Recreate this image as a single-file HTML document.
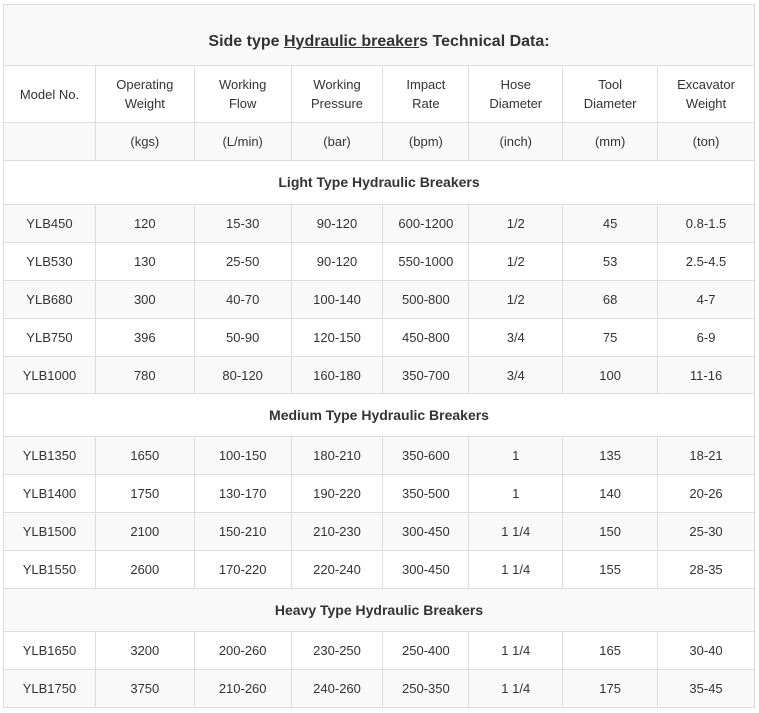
<!DOCTYPE html>
<html><head><meta charset="utf-8"><style>
body{margin:0;background:#fff;font-family:"Liberation Sans",sans-serif;color:#333;}
table{position:absolute;left:3px;top:4px;border-collapse:collapse;width:752px;font-size:13px;}
td{border:1px solid #ddd;text-align:center;padding:0;line-height:19px;}
tr:nth-child(odd) td{background:#f9f9f9;}
.t td{height:61px;font-size:16px;font-weight:bold;padding-top:12px;box-sizing:border-box;}
.sec td{font-weight:bold;font-size:14px;}
</style></head><body>
<table>
<colgroup><col style="width:92px"><col style="width:99px"><col style="width:97px"><col style="width:92px"><col style="width:86px"><col style="width:94px"><col style="width:95px"><col style="width:97px"></colgroup>
<tr class="t"><td colspan="8">Side type <u>Hydraulic breaker</u>s Technical Data:</td></tr>
<tr style="height:57px"><td>Model No.</td><td>Operating<br>Weight</td><td>Working<br>Flow</td><td>Working<br>Pressure</td><td>Impact<br>Rate</td><td>Hose<br>Diameter</td><td>Tool<br>Diameter</td><td>Excavator<br>Weight</td></tr>
<tr style="height:38px"><td></td><td>(kgs)</td><td>(L/min)</td><td>(bar)</td><td>(bpm)</td><td>(inch)</td><td>(mm)</td><td>(ton)</td></tr>
<tr class="sec" style="height:44px"><td colspan="8">Light Type Hydraulic Breakers</td></tr>
<tr style="height:38px"><td>YLB450</td><td>120</td><td>15-30</td><td>90-120</td><td>600-1200</td><td>1/2</td><td>45</td><td>0.8-1.5</td></tr>
<tr style="height:38px"><td>YLB530</td><td>130</td><td>25-50</td><td>90-120</td><td>550-1000</td><td>1/2</td><td>53</td><td>2.5-4.5</td></tr>
<tr style="height:38px"><td>YLB680</td><td>300</td><td>40-70</td><td>100-140</td><td>500-800</td><td>1/2</td><td>68</td><td>4-7</td></tr>
<tr style="height:38px"><td>YLB750</td><td>396</td><td>50-90</td><td>120-150</td><td>450-800</td><td>3/4</td><td>75</td><td>6-9</td></tr>
<tr style="height:37px"><td>YLB1000</td><td>780</td><td>80-120</td><td>160-180</td><td>350-700</td><td>3/4</td><td>100</td><td>11-16</td></tr>
<tr class="sec" style="height:43px"><td colspan="8">Medium Type Hydraulic Breakers</td></tr>
<tr style="height:38px"><td>YLB1350</td><td>1650</td><td>100-150</td><td>180-210</td><td>350-600</td><td>1</td><td>135</td><td>18-21</td></tr>
<tr style="height:38px"><td>YLB1400</td><td>1750</td><td>130-170</td><td>190-220</td><td>350-500</td><td>1</td><td>140</td><td>20-26</td></tr>
<tr style="height:38px"><td>YLB1500</td><td>2100</td><td>150-210</td><td>210-230</td><td>300-450</td><td>1 1/4</td><td>150</td><td>25-30</td></tr>
<tr style="height:38px"><td>YLB1550</td><td>2600</td><td>170-220</td><td>220-240</td><td>300-450</td><td>1 1/4</td><td>155</td><td>28-35</td></tr>
<tr class="sec" style="height:43px"><td colspan="8">Heavy Type Hydraulic Breakers</td></tr>
<tr style="height:38px"><td>YLB1650</td><td>3200</td><td>200-260</td><td>230-250</td><td>250-400</td><td>1 1/4</td><td>165</td><td>30-40</td></tr>
<tr style="height:38px"><td>YLB1750</td><td>3750</td><td>210-260</td><td>240-260</td><td>250-350</td><td>1 1/4</td><td>175</td><td>35-45</td></tr>
</table>
</body></html>
